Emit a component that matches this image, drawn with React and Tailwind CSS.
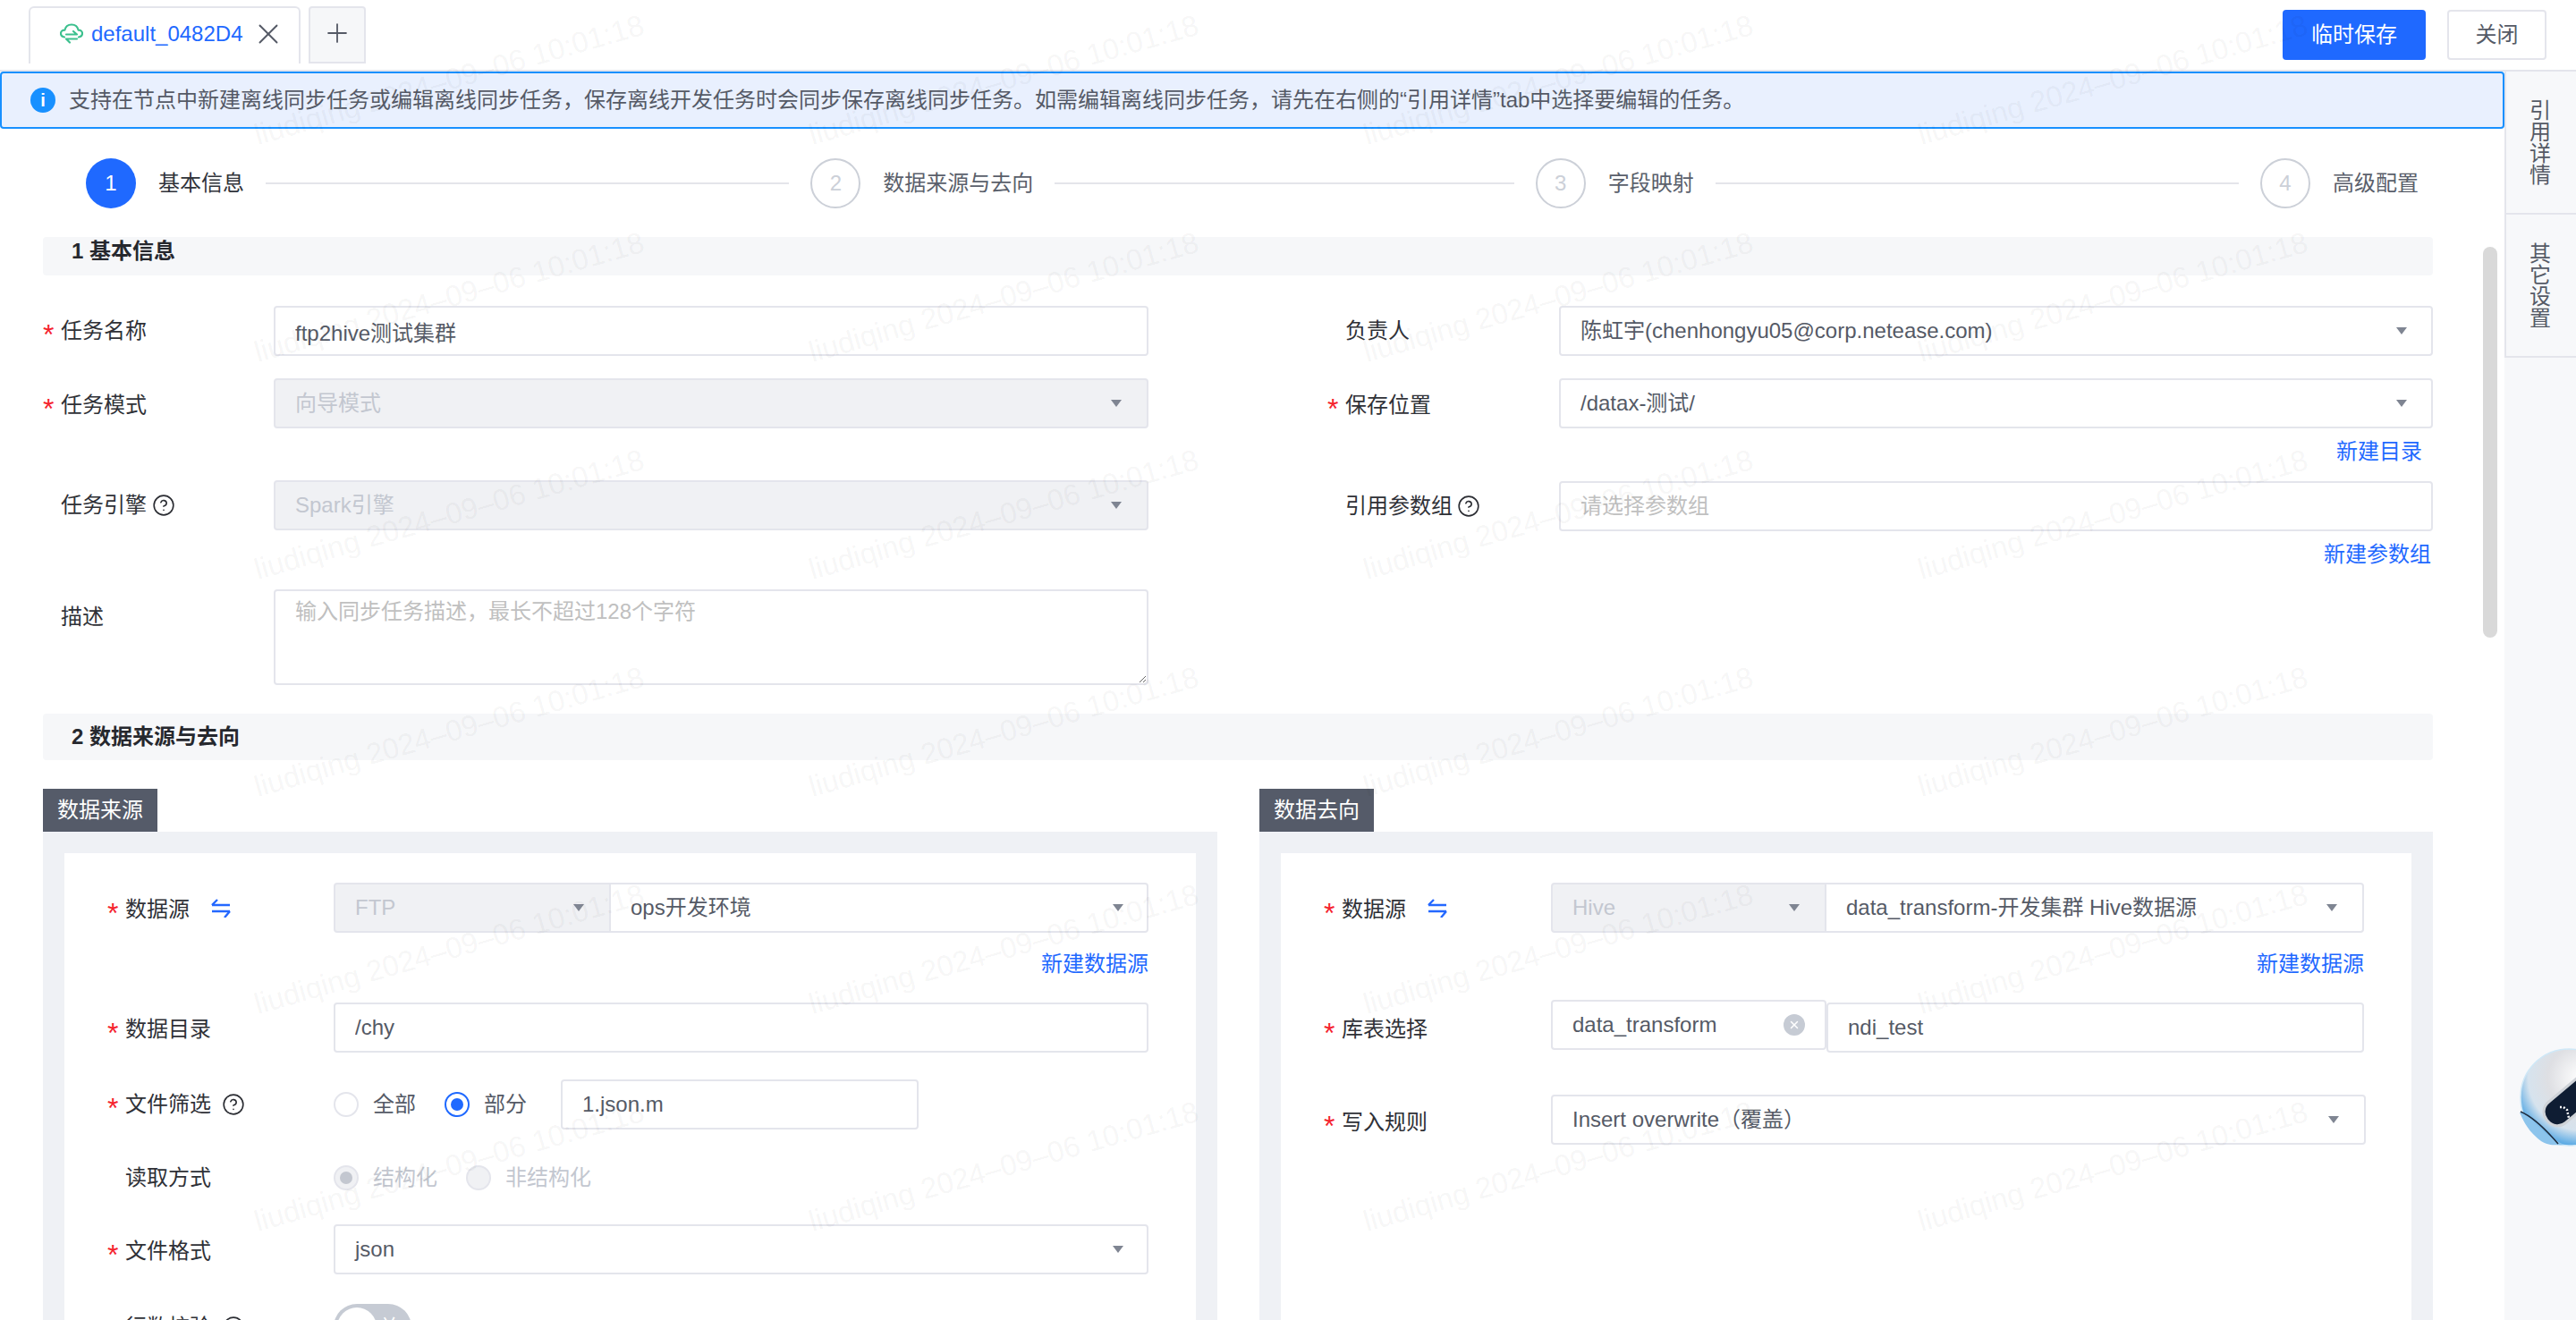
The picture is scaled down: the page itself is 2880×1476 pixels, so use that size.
import React from 'react';
import { X, Plus, CircleHelp } from 'lucide-react';

const steps = ['基本信息', '数据来源与去向', '字段映射', '高级配置'];

const wmCols = [502, 1122, 1742, 2362];
const wmRows = [87, 330, 573, 816, 1059, 1302];

const Caret = ({ className = '' }) => (
  <span className={`w-0 h-0 border-x-[6px] border-x-transparent border-t-[8px] border-t-[#7f8592] ${className}`} />
);

const Star = () => (
  <span className="w-[20px] h-[32px] text-[#f5222d] text-[32px] leading-[32px] translate-y-[4px]">*</span>
);

const Help = ({ className = '' }) => (
  <CircleHelp size={26} strokeWidth={1.5} className={`text-[#2b2d33] ${className}`} />
);

const SwapIcon = () => (
  <svg width="22" height="22" viewBox="0 0 22 22" fill="none" stroke="#2468ff" strokeWidth="2.4" className="ml-[24px] mt-[-4px]">
    <path d="M1 8h20M1 8l6-6" />
    <path d="M1 15h20M21 15l-6 7" />
  </svg>
);

const CloudIcon = () => (
  <svg width="26" height="24" viewBox="0 0 26 24" fill="none" stroke="#3cc08e" strokeWidth="2.2" strokeLinecap="round" strokeLinejoin="round">
    <path d="M5 15.5C2.4 15 1 13.2 1 11.3 1 9 3 7.4 5.4 7.6 6.2 4 9.2 1.5 13 1.5c3.800 0 6.800 2.500 7.600 6.100 2.400-.2 4.400 1.400 4.400 3.700 0 1.900-1.400 3.700-4 4.200" />
    <path d="M7 12.500h12l-4-3.500" />
    <path d="M19 17.500H7l4 4" />
  </svg>
);

const Mascot = () => (
  <svg width="64" height="112" viewBox="0 0 64 112" className="absolute left-[2816px] top-[1172px]">
    <defs>
      <radialGradient id="shell" cx="0.62" cy="0.3" r="0.75">
        <stop offset="0" stopColor="#ffffff" />
        <stop offset="0.45" stopColor="#dedfe3" />
        <stop offset="0.72" stopColor="#d6e3ee" />
        <stop offset="0.9" stopColor="#6db3e6" />
        <stop offset="1" stopColor="#3f9be0" />
      </radialGradient>
    </defs>
    <circle cx="56" cy="55" r="54" fill="url(#shell)" stroke="#cfe8f7" strokeWidth="1.500" />
    <path d="M1 72c4 8 8 20 24 32 10 6 18 4 26 4-16-6-30-22-44-36z" fill="#8cc4ec" />
    <path d="M2 71c14 6 30 22 42 36" fill="none" stroke="#1c2a3c" strokeWidth="1.500" />
    <rect x="32" y="66" width="70" height="30" rx="14" transform="rotate(-40 32 81)" fill="#0f1d33" stroke="#cfd3d8" strokeWidth="3" />
    <path d="M46 66l4 0 4 3 2 9" fill="none" stroke="#ffffff" strokeWidth="2.500" strokeDasharray="2 2" />
  </svg>
);

const Step = ({ index, label, last }) => {
  const active = index === 0;
  return (
    <div className={`flex items-center ${last ? '' : 'flex-1'}`}>
      <span
        className={`w-[56px] h-[56px] rounded-full flex items-center justify-center text-[24px] shrink-0 ${
          active ? 'bg-[#1f69ff] text-white' : 'border-2 border-[#ccd0d8] text-[#ccd0d8]'
        }`}
      >
        {index + 1}
      </span>
      <span className={`ml-[25px] whitespace-nowrap ${active ? 'text-[#30333a]' : 'text-[#5a5f6b]'}`}>{label}</span>
      {!last && <span className="flex-1 h-[2px] bg-[#e4e5ea] mx-[24px]" />}
    </div>
  );
};

const SectionTitle = ({ className = '', children }) => (
  <div className={`bg-[#f6f7f9] rounded-[4px] pl-[32px] font-semibold text-[#26282e] ${className}`}>{children}</div>
);

const Label = ({ required, help, width, children, className = '', after }) => (
  <div className={`flex items-center text-[#2f3137] shrink-0 ${width} ${className}`}>
    {required ? <Star /> : <span className="w-[20px]" />}
    <span>{children}</span>
    {help && <Help className={help} />}
    {after}
  </div>
);

const TextField = ({ value, placeholder, className = '' }) => (
  <input
    readOnly
    value={value || ''}
    placeholder={placeholder}
    className={`h-[56px] border-2 border-[#e4e5ec] rounded-[4px] px-[22px] text-[#555a66] placeholder:text-[#c0c0c0] bg-white outline-none ${className}`}
  />
);

const SelectField = ({ value, disabled, className = '', caretClass = 'mr-[28px]' }) => (
  <div
    className={`h-[56px] flex items-center justify-between border-2 border-[#e4e5ec] rounded-[4px] pl-[22px] ${
      disabled ? 'bg-[#f0f1f4] text-[#c3c7d0]' : 'bg-white text-[#555a66]'
    } ${className}`}
  >
    <span className="whitespace-nowrap">{value}</span>
    <Caret className={caretClass} />
  </div>
);

const Link = ({ children, className = '' }) => (
  <div className={`h-[32px] flex items-center justify-end text-[#1f69ff] ${className}`}>{children}</div>
);

const Radio = ({ checked, disabled, label, className = '' }) => (
  <label className={`flex items-center ${className}`}>
    <span
      className={`w-[28px] h-[28px] rounded-full border-2 flex items-center justify-center ${
        disabled ? 'border-[#e4e5ec] bg-[#f0f1f4]' : checked ? 'border-[#1f69ff] bg-white' : 'border-[#e4e5ec] bg-white'
      }`}
    >
      {checked && <span className={`w-[14px] h-[14px] rounded-full ${disabled ? 'bg-[#c3c7d0]' : 'bg-[#1f69ff]'}`} />}
    </span>
    <span className={`ml-[16px] ${disabled ? 'text-[#c3c7d0]' : 'text-[#555a66]'}`}>{label}</span>
  </label>
);

const Panel = ({ title, className = '', children }) => (
  <div className={`flex flex-col ${className}`}>
    <div className="self-start h-[48px] bg-[#555b69] text-white flex items-center px-[16px]">{title}</div>
    <div className="bg-[#eff1f5] px-[24px] pt-[24px] h-[700px]">
      <div className="bg-white pt-[33px] pl-[48px] pr-[53px] h-full">{children}</div>
    </div>
  </div>
);

const SourceForm = () => (
  <div className="flex flex-col">
    <div className="flex items-center">
      <Label required width="w-[253px]" className="translate-y-[2px]" after={<SwapIcon />}>数据源</Label>
      <div className="flex flex-1">
        <SelectField value="FTP" disabled className="w-[310px] rounded-r-none" />
        <SelectField value="ops开发环境" className="flex-1 rounded-l-none border-l-0" caretClass="mr-[26px]" />
      </div>
    </div>
    <Link className="mt-[19px] mb-[27px]">新建数据源</Link>
    <div className="flex items-center mb-[30px]">
      <Label required width="w-[253px]" className="translate-y-[2px]">数据目录</Label>
      <TextField value="/chy" className="flex-1" />
    </div>
    <div className="flex items-center mb-[26px]">
      <Label required help="ml-[12px]" width="w-[253px]">文件筛选</Label>
      <Radio label="全部" />
      <Radio checked label="部分" className="ml-[32px]" />
      <TextField value="1.json.m" className="w-[400px] ml-[38px]" />
    </div>
    <div className="flex items-center h-[56px] mb-[24px]">
      <Label width="w-[253px]">读取方式</Label>
      <Radio checked disabled label="结构化" />
      <Radio disabled label="非结构化" className="ml-[32px]" />
    </div>
    <div className="flex items-center mb-[33px]">
      <Label required width="w-[253px]" className="translate-y-[2px]">文件格式</Label>
      <SelectField value="json" className="flex-1" caretClass="mr-[26px]" />
    </div>
    <div className="flex items-center">
      <Label help="ml-[12px]" width="w-[253px]">行数校验</Label>
      <div className="w-[87px] h-[52px] rounded-full bg-[#c6cbd4] flex items-center pl-[4px]">
        <span className="w-[44px] h-[44px] rounded-full bg-white" />
        <span className="ml-[3px] text-white text-[22px]">关</span>
      </div>
    </div>
  </div>
);

const TargetForm = () => (
  <div className="flex flex-col">
    <div className="flex items-center">
      <Label required width="w-[254px]" className="translate-y-[2px]" after={<SwapIcon />}>数据源</Label>
      <div className="flex flex-1">
        <SelectField value="Hive" disabled className="w-[308px] rounded-r-none" />
        <SelectField value="data_transform-开发集群 Hive数据源" className="flex-1 rounded-l-none border-l-0" />
      </div>
    </div>
    <Link className="mt-[19px] mb-[27px]">新建数据源</Link>
    <div className="flex items-center mb-[47px]">
      <Label required width="w-[254px]" className="translate-y-[2px]">库表选择</Label>
      <div className="flex flex-1">
        <div className="w-[308px] h-[56px] -translate-y-[3px] flex items-center justify-between border-2 border-[#e4e5ec] rounded-[4px] pl-[22px] pr-[22px] text-[#555a66]">
          <span>data_transform</span>
          <span className="w-[24px] h-[24px] rounded-full bg-[#c6cbd4] flex items-center justify-center">
            <X size={14} strokeWidth={2.5} className="text-white" />
          </span>
        </div>
        <TextField value="ndi_test" className="flex-1 min-w-0" />
      </div>
    </div>
    <div className="flex items-center mr-[-2px]">
      <Label required width="w-[254px]" className="translate-y-[3px]">写入规则</Label>
      <SelectField value="Insert overwrite（覆盖）" className="flex-1" />
    </div>
  </div>
);

const App = () => {
  return (
    <div className="relative w-[2880px] h-[1476px] overflow-hidden bg-white text-[24px] leading-[32px] font-['Liberation_Sans','Noto_Sans_CJK_SC',sans-serif]">
      {/* top bar */}
      <div className="h-[78px] flex items-start justify-between pl-[32px] pr-[33px] pt-[7px]">
        <div className="flex items-start">
          <div className="w-[304px] h-[64px] border-2 border-b-0 border-[#e4e5ec] rounded-t-[6px] flex items-center pl-[33px] pb-[4px]">
            <CloudIcon />
            <span className="ml-[9px] text-[#1f69ff]">default_0482D4</span>
            <X size={38} strokeWidth={1.2} className="ml-[10px] text-[#555a66]" />
          </div>
          <div className="w-[64px] h-[64px] ml-[9px] border-2 border-[#e4e5ec] rounded-t-[4px] bg-[#f6f7f9] flex items-center justify-center pb-[4px]">
            <Plus size={34} strokeWidth={1.3} className="text-[#555a66]" />
          </div>
        </div>
        <div className="flex items-center pt-[4px]">
          <button className="w-[160px] h-[56px] bg-[#1f69ff] text-white rounded-[4px]">临时保存</button>
          <button className="w-[111px] h-[56px] ml-[24px] border-2 border-[#e4e5ec] rounded-[4px] text-[#555a66] bg-white">关闭</button>
        </div>
      </div>

      <div className="h-[2px] bg-[#e4e5ec]" />

      <div className="flex h-[1396px]">
        <div className="relative w-[2800px] flex flex-col">
          {/* tips */}
          <div className="h-[64px] shrink-0 bg-[#e9f0fe] border-2 border-[#1890ff] rounded-[4px] flex items-center pl-[32px] text-[#555a66]">
            <span className="w-[28px] h-[28px] rounded-full bg-[#1890ff] text-white text-[20px] font-bold flex items-center justify-center shrink-0">i</span>
            <span className="ml-[15px] whitespace-nowrap">
              支持在节点中新建离线同步任务或编辑离线同步任务，保存离线开发任务时会同步保存离线同步任务。如需编辑离线同步任务，请先在右侧的“引用详情”tab中选择要编辑的任务。
            </span>
          </div>

          {/* steps */}
          <div className="h-[121px] shrink-0 flex items-start pt-[33px] pl-[96px] pr-[96px]">
            {steps.map((label, i) => (
              <Step key={label} index={i} label={label} last={i === steps.length - 1} />
            ))}
          </div>

          <div className="pl-[48px] w-[2720px]">
            <SectionTitle className="h-[43px] mb-[34px]">1 基本信息</SectionTitle>

            <div className="flex gap-[200px]">
              <div className="w-[1236px] flex flex-col">
                <div className="flex items-center mb-[25px]">
                  <Label required width="w-[258px]">任务名称</Label>
                  <TextField value="ftp2hive测试集群" className="flex-1" />
                </div>
                <div className="flex items-start mb-[58px]">
                  <Label required width="w-[258px]" className="h-[56px] translate-y-[2px]">任务模式</Label>
                  <SelectField value="向导模式" disabled className="flex-1" />
                </div>
                <div className="flex items-center mb-[66px]">
                  <Label help="ml-[6px]" width="w-[258px]">任务引擎</Label>
                  <SelectField value="Spark引擎" disabled className="flex-1" />
                </div>
                <div className="flex items-start">
                  <Label width="w-[258px]" className="pt-[15px]">描述</Label>
                  <textarea
                    readOnly
                    placeholder="输入同步任务描述，最长不超过128个字符"
                    className="flex-1 h-[107px] border-2 border-[#e4e5ec] rounded-[4px] px-[22px] py-[7px] placeholder:text-[#c0c0c0] outline-none"
                  />
                </div>
              </div>

              <div className="w-[1236px] flex flex-col">
                <div className="flex items-center mb-[25px]">
                  <Label width="w-[259px]">负责人</Label>
                  <SelectField value="陈虹宇(chenhongyu05@corp.netease.com)" className="flex-1" caretClass="mr-[27px]" />
                </div>
                <div className="flex items-center">
                  <Label required width="w-[259px]" className="translate-y-[2px]">保存位置</Label>
                  <SelectField value="/datax-测试/" className="flex-1" caretClass="mr-[27px]" />
                </div>
                <Link className="mt-[10px] mb-[17px] pr-[12px]">新建目录</Link>
                <div className="flex items-center">
                  <Label help="ml-[5px]" width="w-[259px]">引用参数组</Label>
                  <TextField placeholder="请选择参数组" className="flex-1" />
                </div>
                <Link className="mt-[10px] pr-[2px]">新建参数组</Link>
              </div>
            </div>

            <SectionTitle className="h-[52px] mt-[32px] mb-[32px] flex items-center">2 数据来源与去向</SectionTitle>

            <div className="flex gap-[47px]">
              <Panel title="数据来源" className="w-[1313px]"><SourceForm /></Panel>
              <Panel title="数据去向" className="w-[1312px]"><TargetForm /></Panel>
            </div>
          </div>

          {/* scrollbar */}
          <div className="absolute left-[2776px] top-[196px] w-[16px] h-[437px] rounded-full bg-[#d9d9d9]" />
        </div>

        {/* right tabs */}
        <div className="w-[80px] bg-[#f7f8fa] text-[#555a66]">
          <div className="h-[160px] border-l-2 border-b-2 border-[#e4e5ec] flex items-center justify-center pr-[7px]">
            <span className="[writing-mode:vertical-rl]">引用详情</span>
          </div>
          <div className="h-[160px] border-l-2 border-b-2 border-[#e4e5ec] flex items-center justify-center pr-[7px]">
            <span className="[writing-mode:vertical-rl]">其它设置</span>
          </div>
        </div>
      </div>

      <Mascot />

      {/* watermark */}
      <div className="absolute inset-0 pointer-events-none overflow-hidden">
        {wmRows.flatMap((y) =>
          wmCols.map((x) => (
            <span
              key={`${x}-${y}`}
              className="absolute -translate-x-1/2 -translate-y-1/2 -rotate-[16deg] whitespace-nowrap text-[33px] leading-none text-black/[0.05]"
              style={{ left: x, top: y + 2 }}
            >
              liudiqing 2024–09–06 10:01:18
            </span>
          ))
        )}
      </div>
    </div>
  );
};

export default App;
